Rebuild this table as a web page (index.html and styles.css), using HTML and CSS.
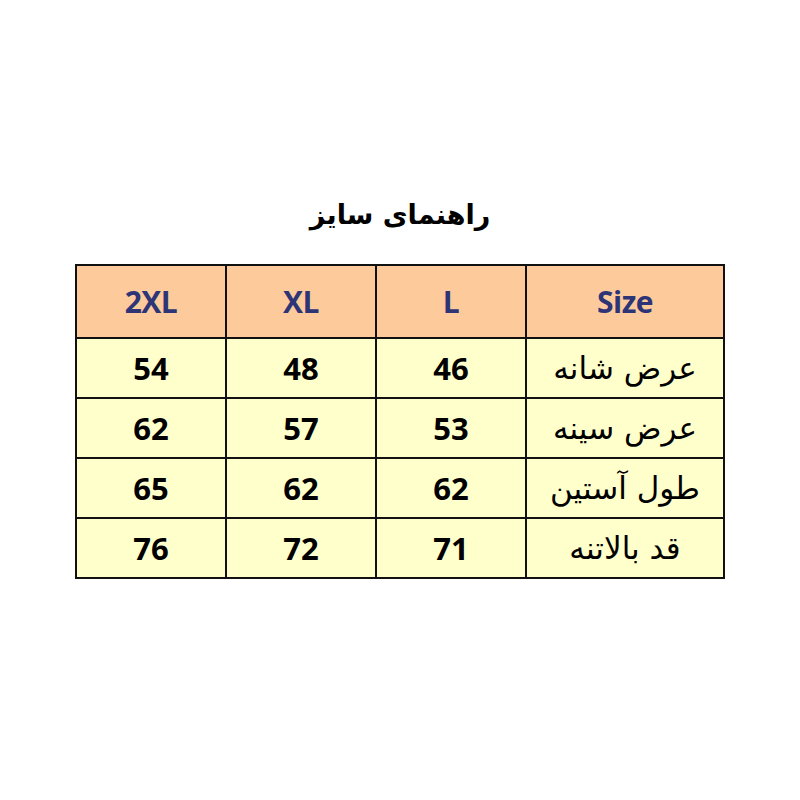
FILE: index.html
```html
<!DOCTYPE html>
<html lang="fa">
<head>
<meta charset="utf-8">
<link rel="stylesheet" href="styles.css">
</head>
<body>
<div class="page">
  <h1 class="title" dir="rtl">راهنمای سایز</h1>
  <table class="sizes" dir="rtl">
    <colgroup>
      <col class="c-label">
      <col class="c-size">
      <col class="c-size">
      <col class="c-size">
    </colgroup>
    <thead>
      <tr>
        <th>Size</th>
        <th>L</th>
        <th>XL</th>
        <th>2XL</th>
      </tr>
    </thead>
    <tbody>
      <tr><td class="label">عرض شانه</td><td>46</td><td>48</td><td>54</td></tr>
      <tr><td class="label">عرض سینه</td><td>53</td><td>57</td><td>62</td></tr>
      <tr><td class="label">طول آستین</td><td>62</td><td>62</td><td>65</td></tr>
      <tr><td class="label">قد بالاتنه</td><td>71</td><td>72</td><td>76</td></tr>
    </tbody>
  </table>
</div>
</body>
</html>
```

FILE: styles.css
```css
html, body {
  margin: 0;
  padding: 0;
  background: #ffffff;
}
.page {
  width: 800px;
  height: 800px;
  padding-top: 190px;
  box-sizing: border-box;
}
.title {
  margin: 0;
  height: 50px;
  line-height: 50px;
  text-align: center;
  font-family: "DejaVu Sans", sans-serif;
  font-weight: bold;
  font-size: 27px;
  color: #000000;
}
.sizes {
  margin: 24px 0 0 75px;
  width: 650px;
  border-collapse: collapse;
  table-layout: fixed;
}
.sizes .c-label {
  width: 198px;
}
.sizes .c-size {
  width: 150px;
}
.sizes th, .sizes td {
  border: 2px solid #111111;
  text-align: center;
  vertical-align: middle;
  padding: 0;
}
.sizes th {
  height: 71px;
  background: #fdcb9b;
  color: #2e3577;
  font-family: "Open Sans", "Liberation Sans", sans-serif;
  font-weight: bold;
  font-size: 30px;
  letter-spacing: -0.5px;
}
.sizes td {
  height: 58px;
  background: #ffffcc;
  color: #000000;
  font-family: "Open Sans", "Liberation Sans", sans-serif;
  font-weight: bold;
  font-size: 31px;
}
.sizes td.label {
  font-family: "DejaVu Sans", sans-serif;
  font-weight: normal;
  font-size: 31px;
}
```
